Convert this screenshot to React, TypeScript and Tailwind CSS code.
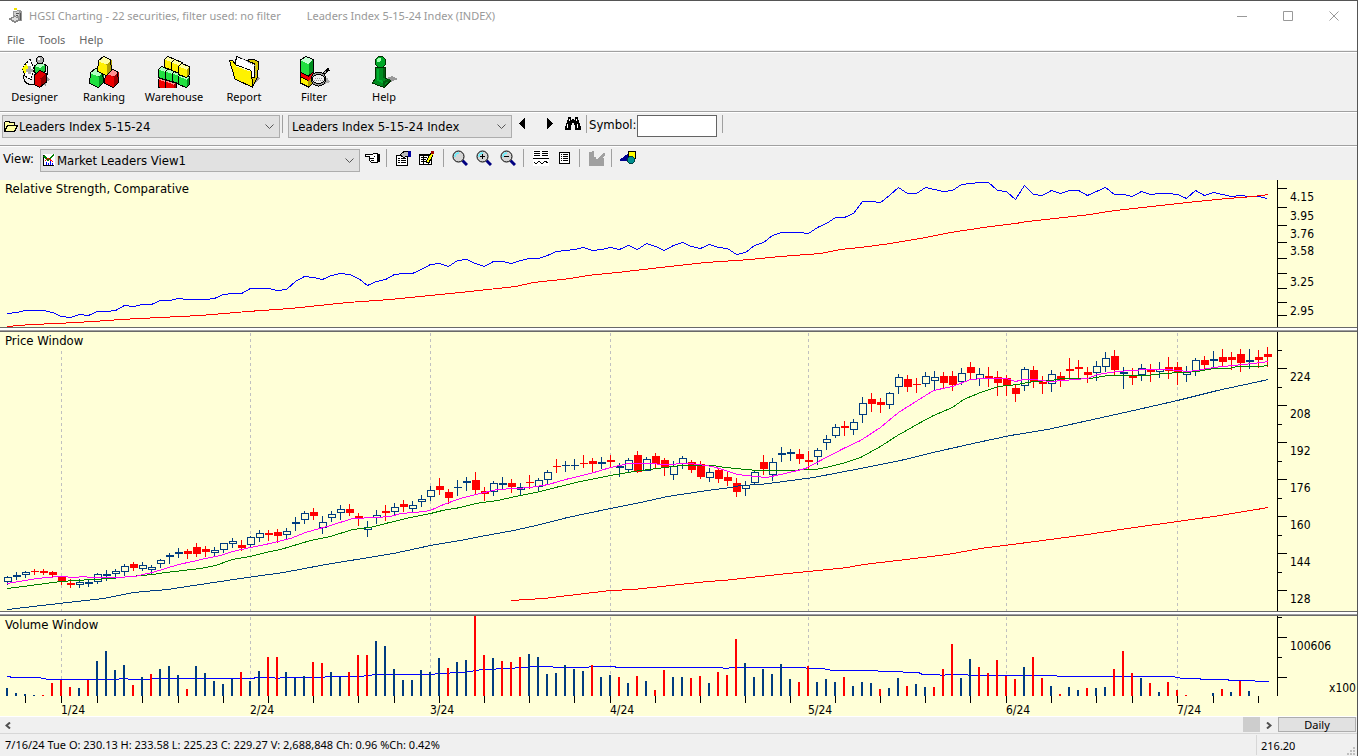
import { useState } from "react";
import type { ReactNode } from "react";

const STEP = 9;
const FIRST = 7;
const NAVY = "#003c80";
const RED = "#ff0000";

const MONTHS: [number, string][] = [
  [61, "1/24"],
  [250, "2/24"],
  [430, "3/24"],
  [610, "4/24"],
  [808, "5/24"],
  [1006, "6/24"],
  [1177, "7/24"],
];

const WEEKS = [
  25, 61, 97, 142, 178, 223, 268, 313, 358, 394, 439, 484, 529, 574, 610, 655, 700, 745, 790, 835, 880,
  925, 970, 1006, 1051, 1096, 1132, 1177, 1213, 1258,
];

const strength = [
  133, 132, 130, 130, 130, 132, 136, 137, 134, 135, 131, 131, 130, 125, 126, 124, 124, 120, 120, 118,
  119, 119, 119, 118, 114, 113, 113, 108, 108, 108, 110, 109, 101, 96, 97, 99, 95, 93, 94, 98, 105, 101,
  99, 94, 93, 93, 89, 84, 83, 86, 80, 79, 83, 86, 81, 81, 83, 80, 78, 78, 75, 71, 70, 69, 67, 70, 69, 67,
  69, 65, 69, 63, 66, 70, 65, 62, 66, 68, 64, 67, 68, 74, 72, 65, 62, 55, 52, 52, 52, 53, 47, 43, 37, 37,
  33, 21, 21, 22, 15, 7, 13, 13, 7, 9, 11, 10, 4, 3, 2, 2, 10, 11, 19, 5, 14, 15, 10, 13, 10, 10, 15, 11,
  7, 14, 14, 16, 11, 14, 13, 13, 14, 18, 10, 15, 12, 14, 16, 15, 16, 16, 18,
];

const strengthAvg =
  "7,146 30,144 57,143 93,141 120,139 160,137 200,135 247,131 290,128 347,122 390,119 430,115 460,112 515,106 533,102 570,98 587,95 617,92 660,87 705,82 750,79 780,76 820,73 840,69 860,67 890,63 920,58 950,52 990,46 1015,43 1027,41 1063,37 1090,34 1107,31 1133,28 1187,22 1227,18 1253,16 1268,14";

// direction, high, body top, body bottom, low
type Candle = ["u" | "d", number, number, number, number];
const candles: Candle[] = [
  ["u", 246, 247, 252, 255], ["u", 242, 245, 247, 250], ["u", 241, 242, 245, 248], ["d", 239, 241, 242, 245],
  ["d", 239, 241, 243, 245], ["d", 241, 242, 245, 248], ["d", 246, 246, 252, 255], ["d", 249, 253, 255, 258],
  ["u", 249, 252, 255, 258], ["u", 249, 252, 254, 257], ["u", 243, 244, 252, 254], ["u", 240, 244, 246, 251],
  ["u", 239, 241, 244, 249], ["u", 234, 236, 242, 246], ["d", 232, 234, 238, 241], ["u", 232, 235, 239, 241],
  ["u", 235, 237, 240, 244], ["u", 229, 230, 234, 238], ["u", 223, 225, 227, 234], ["u", 218, 222, 224, 228],
  ["d", 219, 221, 224, 229], ["d", 213, 217, 224, 227], ["d", 216, 219, 222, 227], ["u", 217, 220, 223, 226],
  ["u", 213, 213, 220, 223], ["u", 208, 211, 214, 218], ["d", 210, 215, 218, 221], ["u", 206, 207, 215, 218],
  ["u", 200, 203, 208, 212], ["d", 200, 203, 205, 211], ["d", 199, 202, 206, 213], ["u", 198, 201, 205, 209],
  ["u", 187, 192, 194, 201], ["u", 181, 183, 190, 194], ["d", 178, 182, 186, 190], ["u", 186, 192, 198, 204],
  ["u", 181, 184, 188, 192], ["u", 175, 179, 183, 190], ["d", 174, 179, 183, 186], ["d", 183, 186, 189, 196],
  ["u", 191, 197, 200, 207], ["u", 180, 185, 188, 194], ["d", 175, 181, 183, 191], ["u", 173, 177, 182, 185],
  ["d", 170, 174, 177, 182], ["u", 171, 175, 179, 183], ["u", 165, 169, 172, 177], ["u", 156, 160, 167, 171],
  ["d", 148, 156, 160, 165], ["d", 159, 162, 168, 174], ["u", 150, 157, 158, 166], ["u", 147, 151, 153, 161],
  ["d", 142, 150, 160, 164], ["d", 157, 161, 164, 171], ["u", 151, 153, 162, 166], ["u", 147, 153, 155, 160],
  ["d", 149, 153, 157, 163], ["u", 153, 157, 160, 165], ["d", 145, 152, 153, 159], ["u", 148, 150, 157, 161],
  ["u", 140, 142, 150, 154], ["d", 129, 136, 137, 143], ["u", 131, 135, 136, 142], ["u", 129, 135, 136, 140],
  ["d", 125, 133, 134, 138], ["d", 128, 131, 134, 143], ["u", 127, 132, 134, 139], ["d", 125, 130, 132, 137],
  ["u", 133, 136, 138, 147], ["u", 128, 130, 140, 142], ["d", 121, 125, 142, 143], ["u", 127, 129, 141, 141],
  ["d", 123, 126, 134, 138], ["d", 128, 130, 138, 146], ["u", 131, 136, 145, 150], ["u", 126, 128, 134, 139],
  ["d", 130, 132, 140, 143], ["d", 131, 134, 147, 149], ["u", 138, 142, 148, 152], ["d", 138, 140, 149, 153],
  ["d", 141, 147, 151, 156], ["d", 148, 153, 162, 167], ["u", 151, 155, 159, 166], ["u", 141, 142, 153, 155],
  ["d", 125, 132, 139, 145], ["u", 128, 132, 145, 151], ["u", 117, 123, 125, 132], ["u", 119, 122, 124, 131],
  ["d", 119, 124, 129, 134], ["d", 121, 130, 132, 139], ["u", 118, 120, 127, 135], ["u", 105, 109, 113, 120],
  ["u", 94, 97, 106, 108], ["d", 91, 96, 98, 106], ["u", 89, 92, 100, 105], ["u", 67, 73, 85, 93],
  ["d", 63, 69, 74, 82], ["d", 68, 72, 75, 83], ["u", 62, 63, 75, 79], ["u", 44, 47, 57, 64],
  ["d", 45, 49, 57, 62], ["d", 48, 54, 55, 63], ["u", 42, 46, 54, 57], ["u", 41, 47, 51, 60],
  ["d", 42, 46, 53, 58], ["d", 41, 46, 55, 61], ["u", 38, 43, 52, 55], ["d", 32, 37, 43, 49],
  ["u", 38, 44, 49, 56], ["d", 37, 46, 48, 57], ["d", 41, 47, 53, 66], ["d", 45, 48, 55, 66],
  ["d", 55, 58, 64, 72], ["u", 37, 39, 56, 61], ["d", 36, 40, 52, 58], ["d", 46, 52, 54, 64],
  ["u", 40, 44, 54, 62], ["d", 42, 46, 50, 57], ["d", 28, 39, 41, 49], ["d", 30, 37, 39, 49],
  ["d", 37, 42, 45, 53], ["u", 31, 36, 43, 51], ["u", 22, 28, 37, 42], ["d", 20, 26, 40, 45],
  ["u", 37, 42, 44, 59], ["d", 38, 46, 48, 55], ["u", 34, 38, 45, 51], ["d", 34, 39, 42, 52],
  ["u", 32, 39, 42, 48], ["d", 27, 37, 41, 49], ["d", 32, 37, 42, 55], ["u", 36, 42, 45, 52],
  ["u", 28, 30, 42, 46], ["d", 26, 30, 35, 40], ["u", 21, 29, 31, 37], ["d", 19, 27, 32, 36],
  ["d", 22, 27, 30, 40], ["d", 19, 24, 33, 42], ["u", 19, 30, 32, 39], ["d", 20, 27, 30, 38],
  ["d", 17, 24, 27, 37],
];

const averages = [
  {
    color: RED,
    points:
      "511,270 543,268 610,260 633,259 707,251 723,250 787,243 808,241 847,237 863,234 897,230 947,224 980,218 1027,212 1087,204 1127,198 1177,191 1220,185 1268,177",
  },
  {
    color: NAVY,
    points:
      "7,279 67,272 103,268 133,262 167,259 213,252 247,247 283,242 320,235 350,230 393,223 430,215 460,210 480,206 513,200 540,194 567,187 610,178 640,172 667,166 707,160 730,157 740,155 760,154 783,151 813,147 860,138 900,130 937,121 977,112 1010,105 1047,99 1097,88 1133,80 1177,70 1217,60 1268,49",
  },
  {
    color: "#008000",
    points:
      "7,258 30,255 60,251 75,250 110,248 130,246 152,244 165,242 200,238 215,235 232,229 250,226 265,222 280,219 310,210 330,206 352,199 370,197 385,193 410,187 430,183 442,180 460,177 475,173 497,170 515,166 540,161 555,157 580,151 610,145 640,140 665,137 680,135 712,135 725,137 745,139 757,140 780,140 815,139 830,136 845,132 860,127 880,116 897,105 920,92 933,85 952,77 963,69 980,62 998,56 1017,54 1033,51 1050,50 1063,48 1090,48 1107,45 1147,45 1163,43 1197,41 1213,38 1228,38 1237,36 1260,36 1268,35",
  },
  {
    color: "#ff00ff",
    points:
      "7,253 30,249 45,247 60,246 75,247 82,246 90,247 115,247 135,246 142,244 152,242 165,238 178,234 192,231 205,228 220,225 232,221 250,217 265,214 290,208 305,202 330,195 352,188 375,187 390,186 400,183 425,181 432,179 443,174 460,168 475,164 497,159 515,158 530,157 548,154 565,149 590,143 610,137 628,133 650,133 662,134 690,133 712,136 722,139 737,144 755,146 766,147 780,144 793,141 805,138 820,130 843,118 860,110 880,97 898,82 917,70 933,60 952,56 970,49 983,48 1006,48 1015,51 1023,49 1033,49 1050,51 1063,50 1087,48 1097,44 1117,41 1130,40 1147,39 1167,39 1187,41 1197,40 1213,37 1233,35 1253,33 1268,31",
  },
];

// negative values are down days
const volumes = [
  8, 3, 2, 1, -1, -13, -16, -9, 8, -16, 35, 45, 26, 31, -11, 19, -22, 27, 30, 21, -7, 30, 23, 15, 12, 17,
  -24, 15, 25, -39, -39, 24, 18, 20, -34, -33, 24, 19, -24, -41, -41, 55, 50, 27, 16, 16, 26, 24, 38, -28,
  34, 36, -80, -41, 38, -35, -34, -39, 42, 39, 22, 23, 31, 27, 25, -31, 19, 21, -19, 13, -20, 15, -6, -26,
  19, 19, -18, -20, 13, -24, -21, -57, 33, 19, 27, 22, 32, 17, -14, -30, 14, 17, 14, -19, 10, 14, 13, -7,
  8, 18, -10, 12, 9, -9, -27, -52, 18, 37, -29, -23, -36, -20, -17, 29, -39, -18, 10, -2, 9, 6, -8, 8, 9,
  -27, -45, -23, 18, -13, 4, -14, -6, -1, 0, 0, 3, -7, 4, -15, 5,
];

const volumeAvg =
  "7,60 13,61 38,61 48,63 115,63 122,62 132,63 147,63 157,62 250,62 258,61 272,61 277,62 282,61 320,61 330,60 360,60 375,58 430,58 440,57 460,56 470,55 482,53 510,52 520,51 535,50 550,50 555,51 585,51 593,50 613,50 617,51 720,51 725,52 732,51 803,51 808,52 822,52 832,54 875,54 880,55 900,55 905,56 918,56 922,58 937,58 942,59 948,58 965,58 970,59 1055,59 1058,60 1172,60 1182,62 1198,62 1202,63 1226,63 1230,64 1253,64 1256,65 1268,65";

function Line({ points, color }: { points: string; color: string }) {
  return <polyline points={points} fill="none" stroke={color} transform="translate(0.5 0.5)" />;
}

function Grid({ height, skip }: { height: number; skip: number }) {
  return (
    <>
      {MONTHS.map(([x], i) => (
        <line
          key={x}
          x1={x + 0.5}
          x2={x + 0.5}
          y1={i === 0 ? skip : 1}
          y2={height}
          stroke="#c0c0c0"
          strokeDasharray="3 3"
        />
      ))}
    </>
  );
}

// one tick per entry: [y, long, label]
type Tick = [number, boolean, string?];

function Axis({ ticks, height, unit }: { ticks: Tick[]; height: number; unit?: string }) {
  return (
    <svg className="h-full w-20 shrink-0 overflow-hidden" shapeRendering="crispEdges">
      <rect x="0" y="0" width="1" height={height} />
      {ticks.map(([y, long, label]) => (
        <g key={y}>
          <rect x="0" y={y} width={long ? 10 : 5} height="1" />
          {label && (
            <text x="13" y={y + 13} fontSize="12">
              {label}
            </text>
          )}
        </g>
      ))}
      {unit && (
        <text x="52" y={height - 4} fontSize="12">
          {unit}
        </text>
      )}
    </svg>
  );
}

function Pane({ title, className, axis, children }: { title: string; className: string; axis: ReactNode; children: ReactNode }) {
  return (
    <section className={`relative flex bg-[#ffffd7] ${className}`}>
      <h2 className="absolute top-0 left-[5px] leading-[18px]">{title}</h2>
      <svg className="h-full min-w-0 flex-1" shapeRendering="crispEdges">
        {children}
      </svg>
      {axis}
    </section>
  );
}

function Splitter() {
  return (
    <div className="h-[5px] border-y border-[#696969] bg-white">
      <div className="mt-[2px] h-px bg-[#a0a0a0]" />
    </div>
  );
}

const strengthTicks: Tick[] = [
  [8, true, "4.15"],
  [27, true, "3.95"],
  [45, true, "3.76"],
  [62, true, "3.58"],
  [78, true],
  [93, true, "3.25"],
  [108, true],
  [122, true, "2.95"],
  [135, true],
];
const priceTicks: Tick[] = [
  [18, false],
  [36, true, "224"],
  [55, false],
  [73, true, "208"],
  [92, false],
  [110, true, "192"],
  [129, false],
  [147, true, "176"],
  [166, false],
  [184, true, "160"],
  [203, false],
  [221, true, "144"],
  [240, false],
  [258, true, "128"],
];
const volumeTicks: Tick[] = [
  [1, false],
  [21, true, "100606"],
  [41, false],
  [61, true],
];

function Charts() {
  return (
    <div>
      <Pane title="Relative Strength, Comparative" className="h-[147px]" axis={<Axis ticks={strengthTicks} height={147} />}>
        <Line points={strength.map((y, i) => `${FIRST + STEP * i},${y}`).join(" ")} color="#0000ff" />
        <Line points={strengthAvg} color={RED} />
      </Pane>
      <Splitter />
      <Pane title="Price Window" className="h-[279px]" axis={<Axis ticks={priceTicks} height={279} />}>
        <Grid height={279} skip={19} />
        <g transform="translate(0 -2)">
          {candles.map(([dir, high, top, bottom, low], i) => {
            const x = FIRST + STEP * i;
            const color = dir === "u" ? NAVY : RED;
            const hollow = dir === "u" && bottom - top > 2;
            return (
              <g key={i} fill={color}>
                <rect x={x} y={high} width="1" height={low - high} />
                <rect x={x - 3} y={top} width="8" height={bottom - top} />
                {hollow && <rect x={x - 2} y={top + 1} width="6" height={bottom - top - 2} fill="#ffffd7" />}
              </g>
            );
          })}
          {averages.map((a) => (
            <Line key={a.color} points={a.points} color={a.color} />
          ))}
        </g>
      </Pane>
      <Splitter />
      <Pane title="Volume Window" className="h-[100px]" axis={<Axis ticks={volumeTicks} height={80} unit="x100" />}>
        <Grid height={80} skip={18} />
        <Line points={volumeAvg} color="#0000ff" />
        {volumes.map((v, i) => (
          <rect
            key={i}
            x={FIRST + STEP * i - 1}
            y={80 - Math.abs(v)}
            width="2"
            height={Math.abs(v)}
            fill={v < 0 ? RED : NAVY}
          />
        ))}
        {WEEKS.map((x) => (
          <rect key={x} x={x} y="80" width="1" height="7" />
        ))}
        {MONTHS.map(([x, label]) => (
          <text key={label} x={x} y="98" fontSize="12">
            {label}
          </text>
        ))}
      </Pane>
    </div>
  );
}

type Shades = { light: string; mid: string; dark: string };

function Cube({ x, y, light, mid, dark }: Shades & { x: number; y: number }) {
  return (
    <g transform={`translate(${x} ${y})`}>
      <path d="M0.5 5 6.500 0.500 14.500 4 9.500 8.500Z" fill={light} />
      <path d="M0.500 5 9.500 8.500V19.500L0.500 15.500Z" fill={mid} />
      <path d="M9.500 8.500 14.500 4V14.500L9.500 19.500Z" fill={dark} />
      <path d="M1.500 4.500 6.500 0.500 13.500 3.500 14.500 14.500 9.500 19.500 0.500 15.500Z" fill="none" stroke="#000" />
    </g>
  );
}

function SmallCube({ x, y, light, mid, dark }: Shades & { x: number; y: number }) {
  return (
    <g transform={`translate(${x} ${y})`}>
      <path d="M0.500 3.500 3.500 0.500 11.500 3.500 8.500 6.500Z" fill={light} />
      <path d="M0.500 3.500 8.500 6.500V14.500L0.500 11.500Z" fill={mid} />
      <path d="M8.500 6.500 11.500 3.500V11.500L8.500 14.500Z" fill={dark} />
      <path d="M0.500 3.500 3.500 0.500 11.500 3.500V11.500L8.500 14.500 0.500 11.500Z" fill="none" stroke="#000" />
    </g>
  );
}

const yellow = { light: "#ffffa0", mid: "#fff000", dark: "#b0a000" };
const green = { light: "#b0ffc0", mid: "#20e040", dark: "#009020" };
const red = { light: "#ff9090", mid: "#f00000", dark: "#a00000" };

function DesignerIcon() {
  return (
    <>
      <path d="M23 27 31 24 28 20 27 30Z" fill="#999" />
      <path d="M5 19C4 26 7 29 17 29M21 8C29 7 31 13 27 21" fill="none" stroke="#000" />
      <path d="M11 3 15 12 12 24 6 20 3 12Z" fill="#fff" stroke="#000" strokeDasharray="2 1" />
      <path d="M3 12 8 8 9 12 6 18Z" fill="#ffff00" />
      <path d="M10 10V18M7 14H14" stroke="#aaa" strokeWidth="3" />
      <path d="M15.500 10 21 6.500 26.500 9V15L20 19 15.500 16Z" fill="#20d040" stroke="#000" />
      <path d="M16 10 21 7 26 9 21 12Z" fill="#b0ffc0" />
      <circle cx="21" cy="4" r="3.500" fill="#aaa" stroke="#000" />
      <circle cx="20" cy="3" r="1.300" fill="#fff" />
      <path d="M15.500 19 20.500 14.500 27.500 17.500V26L20.500 31.500 15.500 28.500Z" fill="#e00000" />
      <path d="M21.500 22.500 27 18V26L21.500 31Z" fill="#900000" />
      <path d="M15.500 19 20.500 14.500 27.500 17.500V26L20.500 31.500 15.500 28.500Z" fill="none" stroke="#000" />
    </>
  );
}

function RankingIcon() {
  return (
    <>
      <Cube x={1} y={12} {...green} />
      <Cube x={16} y={12} {...red} />
      <Cube x={9} y={0} {...yellow} />
    </>
  );
}

function WarehouseIcon() {
  return (
    <>
      <SmallCube x={0} y={20} {...red} />
      <SmallCube x={7} y={22} {...red} />
      <SmallCube x={0} y={10} {...green} />
      <SmallCube x={7} y={12} {...green} />
      <SmallCube x={14} y={14} {...green} />
      <SmallCube x={20} y={17} {...green} />
      <SmallCube x={6} y={0} {...yellow} />
      <SmallCube x={13} y={3} {...yellow} />
      <SmallCube x={20} y={7} {...yellow} />
    </>
  );
}

function ReportIcon() {
  return (
    <>
      <path d="M25 29 32 23 28 19Z" fill="#999" />
      <path d="M19 6 21 3 27 4 31 6 29 22 25 30Z" fill="#d8c800" stroke="#000" />
      <path d="M7.500 5 9 0.500 27 8 26 22 8 13Z" fill="#fff" stroke="#000" />
      <path d="M12 1 27 10M27 9V20" stroke="#aaa" strokeDasharray="1 1" />
      <path d="M1.500 4.500 5 5 8 9 23 14.500 25 31.500 7 23Z" fill="#fff200" stroke="#000" />
      <path d="M8 10 22 15" stroke="#ffffc0" />
    </>
  );
}

function FilterIcon() {
  return (
    <>
      <path d="M20 30 32 26 29 21Z" fill="#aaa" />
      <path d="M2 20H14V27L10 31 2 27Z" fill="#fff200" />
      <path d="M10 24 15 20V27L10 31Z" fill="#b0a000" />
      <path d="M2 16H15V20L10 25 2 21Z" fill="#f00000" />
      <path d="M2 4 8 0.500 15.500 3.500 10.500 8Z" fill="#c0ffd0" />
      <path d="M2 4 10.500 8V20L2 16.500Z" fill="#20e040" />
      <path d="M10.500 8 15.500 3.500V15.500L10.500 20Z" fill="#009020" />
      <path d="M2.500 4 8 0.500 15.500 3.500V27L10.500 31 2.500 27Z" fill="none" stroke="#000" />
      <path d="M2.500 16.500 10.500 20 15.500 15.500M2.500 21 10.500 24.500" fill="none" stroke="#000" />
      <path d="M24 19 31 13" stroke="#000" strokeWidth="3" />
      <path d="M25 18 28 15.500" stroke="#aaa" />
      <ellipse cx="20.500" cy="23" rx="7.500" ry="7" fill="#999" stroke="#000" />
      <ellipse cx="20.500" cy="23" rx="6" ry="4.500" fill="#eee" stroke="#000" />
      <path d="M17 22H24M16 24H25" stroke="#999" strokeDasharray="1 1" />
    </>
  );
}

function HelpIcon() {
  return (
    <>
      <path d="M18 28 30 23 24 20 18 22Z" fill="#999" />
      <path d="M7.500 11.500 17.500 11.500V22L22.500 25 16 31.500 4 27 7.500 22.500Z" fill="#008c20" stroke="#003000" />
      <path d="M10 13V24L17 27" fill="none" stroke="#00b030" strokeWidth="2" />
      <path d="M16 12V22M16 31V26L22 24" fill="none" stroke="#006010" strokeWidth="2" />
      <circle cx="12.500" cy="6" r="5.500" fill="#00a828" stroke="#003000" />
      <circle cx="11" cy="4" r="2" fill="#a0ffb0" />
    </>
  );
}

const tools: [string, () => ReactNode][] = [
  ["Designer", DesignerIcon],
  ["Ranking", RankingIcon],
  ["Warehouse", WarehouseIcon],
  ["Report", ReportIcon],
  ["Filter", FilterIcon],
  ["Help", HelpIcon],
];

function Divider({ className = "" }: { className?: string }) {
  return <div className={`h-[18px] w-px shrink-0 bg-[#a0a0a0] ${className}`} />;
}

function Glyph({ children }: { children: ReactNode }) {
  return (
    <svg viewBox="0 0 16 16" className="block size-4" shapeRendering="crispEdges">
      {children}
    </svg>
  );
}

function Dropdown({ label, value, className, icon }: { label: string; value: string; className: string; icon?: ReactNode }) {
  return (
    <div className={`relative h-[23px] shrink-0 ${className}`}>
      <select
        aria-label={label}
        className={`h-full w-full appearance-none border border-[#adadad] bg-[#e1e1e1] pr-5 outline-none ${icon ? "pl-4" : "pl-[3px]"}`}
      >
        <option>{value}</option>
      </select>
      {icon && <span className="pointer-events-none absolute top-[3px] left-px">{icon}</span>}
      <svg className="pointer-events-none absolute top-[9px] right-[6px] h-[6px] w-[9px]" viewBox="0 0 9 6">
        <path d="M0.500 0.500 4.500 4.500 8.500 0.500" fill="none" stroke="#555" />
      </svg>
    </div>
  );
}

function IconButton({ label, className = "", children }: { label: string; className?: string; children: ReactNode }) {
  return (
    <button type="button" aria-label={label} className={`shrink-0 ${className}`}>
      <Glyph>{children}</Glyph>
    </button>
  );
}

function Lens({ sign }: { sign?: "+" | "-" }) {
  return (
    <g shapeRendering="auto">
      <path d="M10.500 10.500 15 15" stroke="#000080" strokeWidth="3" />
      <circle cx="6.500" cy="6.500" r="5.500" fill="#d4d4d4" stroke="#000" />
      <path d="M3 7C3 5 4 3 7 3" fill="none" stroke="#60f0ff" strokeWidth="1.500" />
      {sign && <path d="M4 6.500H9" stroke="#000" />}
      {sign === "+" && <path d="M6.500 4V9" stroke="#000" />}
    </g>
  );
}

function WindowButton({ label, d }: { label: string; d: string }) {
  return (
    <button type="button" aria-label={label} className="flex h-full w-[46px] items-center justify-center">
      <svg className="size-[10px]" viewBox="0 0 10 10">
        <path d={d} fill="none" stroke="#999" />
      </svg>
    </button>
  );
}

export default function App() {
  const [symbol, setSymbol] = useState("");

  return (
    <main className="border-t border-r border-[#555] bg-[#f0f0f0] font-['DejaVu_Sans_Condensed','DejaVu_Sans',sans-serif] text-[13px] text-black">
      <header className="bg-white font-['Noto_Sans',sans-serif] text-[11px]">
        <div className="flex h-[30px] items-center pl-2 text-[#999]">
          <svg viewBox="0 0 16 16" className="size-4" shapeRendering="crispEdges">
            <path d="M5 3 12 2 14 4V13L9 11 5 9Z" fill="#999" />
            <path d="M6 4 11 3V8L7 9Z" fill="#d0d0d0" />
            <path d="M0 11 7 8 14 12 7 15Z" fill="#888" />
            <path d="M3 11 7 9 11 11 7 13Z" fill="#ddd" />
            <path d="M6 0H9V2H6Z" fill="#f0e000" />
            <path d="M12 5V12M8 5H11M8 7H10" stroke="#555" />
          </svg>
          <h1 className="ml-[5px]">HGSI Charting - 22 securities, filter used: no filter</h1>
          <span className="ml-[26px]">Leaders Index 5-15-24 Index (INDEX)</span>
          <div className="ml-auto flex h-full">
            <WindowButton label="Minimize" d="M0 5.500H10" />
            <WindowButton label="Maximize" d="M0.500 0.500H9.500V9.500H0.500Z" />
            <WindowButton label="Close" d="M0.500 0.500 9.500 9.500M9.500 0.500 0.500 9.500" />
          </div>
        </div>
        <nav className="flex h-[19px] items-center gap-[14px] pl-[7px] text-[#666]">
          <button type="button">File</button>
          <button type="button">Tools</button>
          <button type="button">Help</button>
        </nav>
      </header>

      <div className="mt-px flex h-[60px] border-t border-[#a0a0a0] font-['Noto_Sans',sans-serif] text-[11px] shadow-[inset_0_1px_0_#fff]">
        {tools.map(([name, Icon]) => (
          <button key={name} type="button" className="flex w-[70px] flex-col items-center pt-1 leading-[18px] first:w-[69px]">
            <svg viewBox="0 0 32 32" className="size-8" shapeRendering="crispEdges">
              <Icon />
            </svg>
            {name}
          </button>
        ))}
      </div>

      <div className="flex h-[34px] border-t border-[#a0a0a0] pt-[3px] pl-[2px] shadow-[inset_0_1px_0_#fff]">
        <Dropdown
          label="Group"
          value="Leaders Index 5-15-24"
          className="w-[278px]"
          icon={
            <Glyph>
              <path d="M1.500 13.500V4.500L3 3.500H6L7 4.500H11.500V7.500" fill="#ffffa0" stroke="#000" />
              <path d="M1.500 13.500 4.500 7.500H14.500L11.500 13.500Z" fill="#ffffa0" stroke="#000" />
            </Glyph>
          }
        />
        <Divider className="ml-[2px]" />
        <Dropdown label="Security" value="Leaders Index 5-15-24 Index" className="ml-[5px] w-[224px]" />
        <IconButton label="Previous" className="ml-[3px] h-4">
          <path d="M10 3V14L4 8.500Z" />
        </IconButton>
        <IconButton label="Next" className="ml-[11px] h-4">
          <path d="M5 3V14L11 8.500Z" />
        </IconButton>
        <IconButton label="Find" className="ml-[7px] h-4">
          <path d="M3 2H6V5H7V4H9V5H10V2H13V5H14V8H15V11H16V15H10V10H9V8H7V10H6V15H0V11H1V8H2V5H3Z" />
          <path d="M4.500 4V6M11.500 4V6M2.500 9V13M12.500 9V13" stroke="#fff" />
        </IconButton>
        <Divider className="ml-[5px]" />
        <label htmlFor="symbol" className="ml-[2px] w-12 leading-5">
          Symbol:
        </label>
        <input
          id="symbol"
          value={symbol}
          onChange={(e) => setSymbol(e.target.value)}
          className="h-[22px] w-20 border border-[#646464] bg-white px-1 outline-none"
        />
        <Divider className="ml-[5px]" />
      </div>

      <div className="flex h-[35px] border-t border-[#a0a0a0] pt-[3px] pl-[3px] shadow-[inset_0_1px_0_#fff]">
        <span className="w-[37px] leading-5">View:</span>
        <Dropdown
          label="View"
          value="Market Leaders View1"
          className="w-80"
          icon={
            <Glyph>
              <path d="M2 2H14V14H2Z" fill="#fff" />
              <path d="M2.500 3V13.500H13" fill="none" stroke="#000" />
              <path d="M3 4 7 8 13 3" fill="none" stroke="#008000" strokeWidth="1.500" />
              <path d="M4 9 7 6 12 10" fill="none" stroke="#ff0000" />
              <path d="M5.500 13V10M7.500 13V11M9.500 13V9M11.500 13V11" stroke="#0000ff" />
            </Glyph>
          }
        />
        <IconButton label="Pick view" className="ml-1 h-[18px]">
          <path d="M1.500 4.500H8.500L9.500 3.500H13.500V12.500H7.500L5.500 10.500V6.500H1.500Z" fill="#fff" stroke="#000" />
          <path d="M6 8.500H10M7 10.500H10M9.500 6.500H11" stroke="#000" />
          <path d="M14 4H16V12H14Z" />
        </IconButton>
        <Divider className="ml-[6px]" />
        <IconButton label="Properties" className="ml-2 h-[18px]">
          <path d="M1.500 5.500H12.500V15.500H1.500Z" fill="#fff" stroke="#000" />
          <path d="M3 8.500H5M3 10.500H5M3 12.500H5M6 8.500H11M6 10.500H11M6 12.500H11" stroke="#000" />
          <path d="M5 5 9 1.500H13V6L9 7.500Z" fill="#bbb" stroke="#000" />
          <path d="M13 1H16V7H13Z" fill="#0000a0" />
        </IconButton>
        <IconButton label="Edit" className="ml-2 h-[18px]">
          <path d="M0.500 4.500H12.500V14.500H0.500Z" fill="#fff" stroke="#000" />
          <path d="M1 5.500H12M2 7.500H8M2 9.500H7M2 11.500H7M4.500 5V14" stroke="#000" />
          <path d="M13 4 8 13" stroke="#000" strokeWidth="4" />
          <path d="M13 4 8.500 12" stroke="#ffff00" strokeWidth="2" />
          <path d="M12 1H15V4H12Z" fill="#a00000" />
        </IconButton>
        <Divider className="ml-2" />
        <IconButton label="Zoom" className="ml-2 h-[18px]">
          <Lens />
        </IconButton>
        <IconButton label="Zoom in" className="ml-2 h-[18px]">
          <Lens sign="+" />
        </IconButton>
        <IconButton label="Zoom out" className="ml-2 h-[18px]">
          <Lens sign="-" />
        </IconButton>
        <Divider className="ml-[7px]" />
        <IconButton label="Split panes" className="ml-[9px] h-[18px]">
          <path d="M0 0H16V16H0Z" fill="#fff" />
          <path d="M1 1.500H7M9 1.500H15M1 3.500H7M9 3.500H15M1 5.500H7M9 5.500H15M0 8.500H16" stroke="#000" />
          <path d="M1 12 3 14 6 11 9 14 12 11 15 13" fill="none" stroke="#000" />
        </IconButton>
        <IconButton label="List" className="ml-2 h-[18px]">
          <path d="M2.500 2.500H12.500V13.500H2.500Z" fill="#fff" stroke="#000" />
          <path d="M4 4.500H5M6 4.500H11M4 6.500H5M6 6.500H11M4 8.500H5M6 8.500H11M4 10.500H5M6 10.500H11" stroke="#000" />
        </IconButton>
        <Divider className="ml-[6px]" />
        <IconButton label="Trend" className="ml-[9px] h-[18px]">
          <path d="M0 2H3V1H5V7H7V9H9V8L14 3H16V5L13 8H15V16H0Z" fill="#a0a0a0" />
        </IconButton>
        <Divider className="ml-[6px]" />
        <IconButton label="Shapes" className="ml-2 h-[18px]">
          <path d="M8.500 1.500H15.500V8.500H8.500Z" fill="#ffff00" stroke="#000" />
          <path d="M0 10 7 5V10Z" fill="#000090" stroke="#000090" />
          <circle cx="11" cy="10" r="3.500" fill="#009090" stroke="#004040" />
        </IconButton>
      </div>

      <Charts />

      <div className="flex h-[17px] border-t border-white">
        <button type="button" aria-label="Scroll left" className="flex w-4 items-center justify-center">
          <svg className="h-[7px] w-[6px]" viewBox="0 0 6 7">
            <path d="M5 0.500 1.500 3.500 5 6.500" fill="none" stroke="#505050" strokeWidth="2" />
          </svg>
        </button>
        <div className="flex flex-1 justify-end">
          <div className="h-[15px] w-[17px] bg-[#cdcdcd]" />
        </div>
        <button type="button" aria-label="Scroll right" className="flex w-[18px] items-center justify-center">
          <svg className="h-[7px] w-[6px]" viewBox="0 0 6 7">
            <path d="M1 0.500 4.500 3.500 1 6.500" fill="none" stroke="#505050" strokeWidth="2" />
          </svg>
        </button>
        <button
          type="button"
          className="mr-px h-[15px] w-[78px] border border-[#adadad] bg-[#e1e1e1] font-['Noto_Sans',sans-serif] text-[11px] leading-[13px]"
        >
          Daily
        </button>
      </div>

      <footer className="flex h-[23px] border-t border-[#d7d7d7] font-['Noto_Sans',sans-serif] text-[11px] leading-[22px]">
        <p className="flex-1 pl-[5px]">7/16/24 Tue O: 230.13 H: 233.58 L: 225.23 C: 229.27 V: 2,688,848 Ch: 0.96 %Ch: 0.42%</p>
        <p className="relative my-px w-[101px] border-l border-[#d7d7d7] pl-1">
          216.20
          <svg className="absolute right-[2px] bottom-0 size-2" viewBox="0 0 8 8" fill="#bfbfbf">
            <path d="M6 0H8V2H6ZM3 3H5V5H3ZM6 3H8V5H6ZM0 6H2V8H0ZM3 6H5V8H3ZM6 6H8V8H6Z" />
          </svg>
        </p>
      </footer>
    </main>
  );
}
